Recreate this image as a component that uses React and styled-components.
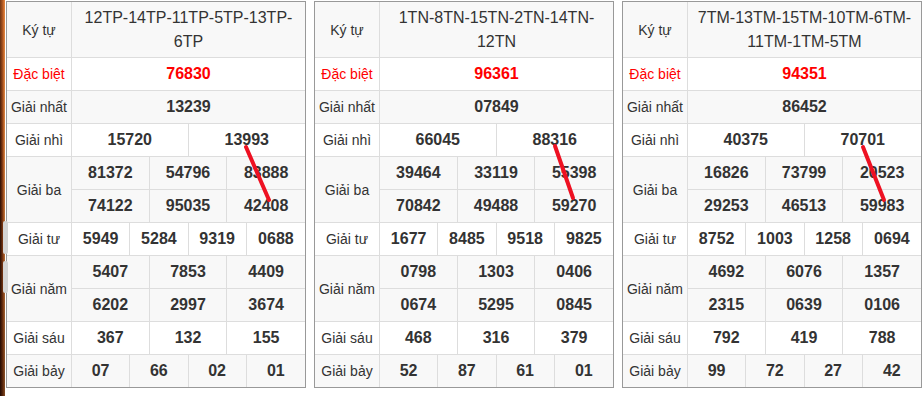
import React from "react";
import styled, { createGlobalStyle } from "styled-components";

const Global = createGlobalStyle`
  html, body { margin: 0; padding: 0; background: #fff; }
  body { font-family: "Liberation Sans", Arial, sans-serif; }
`;

const Page = styled.div`
  display: flex;
  height: 396px;
  overflow: hidden;
`;

const Strip = styled.div`
  position: relative;
  flex: none;
  width: 5px;
  height: 396px;
  background: linear-gradient(to right, #2c0f04 0%, #7a3512 45%, #c46a2c 80%, #d98a4a 100%);
`;

const StripShade = styled.div`
  position: absolute;
  inset: 0;
  background: linear-gradient(to bottom, rgba(255, 140, 60, 0.35) 0%, rgba(0, 0, 0, 0) 40%, rgba(20, 5, 0, 0.45) 100%);
`;

const Tab = styled.div`
  position: absolute;
  left: 3px;
  width: 5px;
  top: ${(p) => p.$top}px;
  height: ${(p) => p.$h}px;
  border-radius: 2px;
  background: #d4d4d4;
  z-index: 2;
`;

const Board = styled.div`
  display: flex;
  align-items: flex-start;
  gap: 8px;
  padding: 1px 0 0 1px;
`;

const Sheet = styled.div`
  position: relative;
  width: 300px;
  box-sizing: border-box;
  border: 1px solid #999;
  color: #333;
`;

const Row = styled.div`
  display: flex;
  background: ${(p) => (p.$alt ? "#f8f8f8" : "#fff")};
  & + & {
    border-top: 1px solid #ddd;
  }
`;

const Label = styled.div`
  flex: none;
  width: 65px;
  box-sizing: border-box;
  border-right: 1px solid #ddd;
  display: flex;
  align-items: center;
  justify-content: center;
  font-size: 14px;
  color: ${(p) => (p.$red ? "#f00" : "#333")};
`;

const Header = styled.div`
  flex: 1;
  min-height: 55px;
  box-sizing: border-box;
  padding: 3px 6px;
  display: flex;
  align-items: center;
  justify-content: center;
  text-align: center;
  font-size: 16px;
  line-height: 24px;
  color: #333;
`;

const Cells = styled.div`
  flex: 1;
  display: grid;
  grid-template-columns: repeat(${(p) => p.$cols}, 1fr);
`;

const Num = styled.div`
  height: ${(p) => (p.$top ? 33 : 32)}px;
  box-sizing: border-box;
  display: flex;
  align-items: center;
  justify-content: center;
  font-size: 16px;
  font-weight: 700;
  color: ${(p) => (p.$red ? "#f00" : "#333")};
  border-right: 1px solid #ddd;
  border-bottom: ${(p) => (p.$top ? "1px solid #ddd" : "none")};
  &:nth-child(${(p) => p.$cols}n) {
    border-right: none;
  }
`;

const Mark = styled.svg`
  position: absolute;
  left: 0;
  top: 0;
  width: 300px;
  height: 388px;
  overflow: visible;
  pointer-events: none;
`;

const tables = [
  {
    code: "12TP-14TP-11TP-5TP-13TP-6TP",
    db: "76830",
    g1: "13239",
    g2: ["15720", "13993"],
    g3: ["81372", "54796", "83888", "74122", "95035", "42408"],
    g4: ["5949", "5284", "9319", "0688"],
    g5: ["5407", "7853", "4409", "6202", "2997", "3674"],
    g6: ["367", "132", "155"],
    g7: ["07", "66", "02", "01"],
    line: [239, 145, 262, 198],
  },
  {
    code: "1TN-8TN-15TN-2TN-14TN-12TN",
    db: "96361",
    g1: "07849",
    g2: ["66045", "88316"],
    g3: ["39464", "33119", "55398", "70842", "49488", "59270"],
    g4: ["1677", "8485", "9518", "9825"],
    g5: ["0798", "1303", "0406", "0674", "5295", "0845"],
    g6: ["468", "316", "379"],
    g7: ["52", "87", "61", "01"],
    line: [240, 144, 258, 196],
  },
  {
    code: "7TM-13TM-15TM-10TM-6TM-11TM-1TM-5TM",
    db: "94351",
    g1: "86452",
    g2: ["40375", "70701"],
    g3: ["16826", "73799", "20523", "29253", "46513", "59983"],
    g4: ["8752", "1003", "1258", "0694"],
    g5: ["4692", "6076", "1357", "2315", "0639", "0106"],
    g6: ["792", "419", "788"],
    g7: ["99", "72", "27", "42"],
    line: [240, 145, 261, 198],
  },
];

function Prize({ label, nums, cols, alt, red }) {
  const double = nums.length > cols;
  return (
    <Row $alt={alt}>
      <Label $red={red}>{label}</Label>
      <Cells $cols={cols}>
        {nums.map((n, i) => (
          <Num key={i} $cols={cols} $top={double && i < cols} $red={red}>
            {n}
          </Num>
        ))}
      </Cells>
    </Row>
  );
}

function Result({ t }) {
  const [x1, y1, x2, y2] = t.line;
  return (
    <Sheet>
      <Row $alt>
        <Label>Ký tự</Label>
        <Header>{t.code.replace(/-/g, "-\u200B")}</Header>
      </Row>
      <Prize label="Đặc biệt" nums={[t.db]} cols={1} red />
      <Prize label="Giải nhất" nums={[t.g1]} cols={1} alt />
      <Prize label="Giải nhì" nums={t.g2} cols={2} />
      <Prize label="Giải ba" nums={t.g3} cols={3} alt />
      <Prize label="Giải tư" nums={t.g4} cols={4} />
      <Prize label="Giải năm" nums={t.g5} cols={3} alt />
      <Prize label="Giải sáu" nums={t.g6} cols={3} />
      <Prize label="Giải bảy" nums={t.g7} cols={4} alt />
      <Mark viewBox="0 0 300 388">
        <line x1={x1} y1={y1} x2={x2} y2={y2} stroke="#ee1122" strokeWidth="4" strokeLinecap="round" />
      </Mark>
    </Sheet>
  );
}

export default function App() {
  return (
    <Page>
      <Global />
      <Strip>
        <StripShade />
        <Tab $top={221} $h={33} />
        <Tab $top={261} $h={32} />
      </Strip>
      <Board>
        {tables.map((t, i) => (
          <Result key={i} t={t} />
        ))}
      </Board>
    </Page>
  );
}
